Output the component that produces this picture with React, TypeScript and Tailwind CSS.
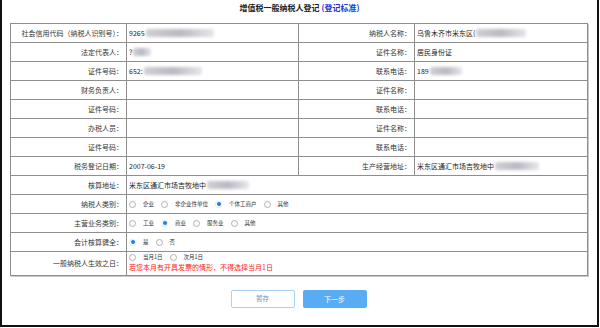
import React from 'react';

// 增值税一般纳税人登记 form

const font = { fontFamily: '"Noto Sans CJK SC", "Liberation Sans", sans-serif' };

const Blur: React.FC<{ w: number }> = ({ w }) => (
  <span
    className="inline-block h-[8px] ml-[1px] rounded-[2px] bg-gradient-to-r from-[#cfcfd4] via-[#b9bac2] to-[#e6e6ea] blur-[1.5px] align-middle"
    style={{ width: w }}
  />
);

const Radio: React.FC<{ checked?: boolean }> = ({ checked }) => (
  <span
    className={
      'inline-flex w-[7px] h-[7px] rounded-full border items-center justify-center shrink-0 ' +
      (checked ? 'border-[#d6e6f7]' : 'border-[#b0b0b0]')
    }
  >
    {checked && <span className="w-[4px] h-[4px] rounded-full bg-[#1b7fe3]" />}
  </span>
);

const Options: React.FC<{ items: string[]; checked: number }> = ({ items, checked }) => (
  <div className="flex items-center gap-[7px]">
    {items.map((it, i) => (
      <React.Fragment key={it}>
        <Radio checked={i === checked} />
        <span className="text-[5.5px] leading-[7px] text-[#333]">{it}</span>
      </React.Fragment>
    ))}
  </div>
);

const Label: React.FC<{ children: React.ReactNode; tall?: boolean }> = ({ children, tall }) => (
  <div
    className={
      'flex items-center justify-end pr-[3px] border-r border-b border-[#8e8e8e] text-[7px] text-[#333] whitespace-nowrap ' +
      (tall ? 'h-[24px]' : 'h-[19px]')
    }
  >
    {children}
  </div>
);

const Value: React.FC<{ children?: React.ReactNode; wide?: boolean }> = ({ children, wide }) => (
  <div
    className={
      'flex items-center pl-[2px] h-[19px] border-r border-b border-[#8e8e8e] text-[7px] text-[#222] whitespace-nowrap ' +
      (wide ? 'col-span-3' : '')
    }
  >
    {children}
  </div>
);

export default function App() {
  return (
    <div className="w-[600px] h-[328px] bg-white" style={font}>
      <div className="w-[599px] h-[327px] border-l-2 border-r-2 border-b-2 border-[#111] flex flex-col">
        <div className="h-[23px] flex justify-center pt-[2px]">
          <span className="text-[8px] leading-[12px] font-bold text-[#222]">
            增值税一般纳税人登记 <span className="text-[#2233cc]">(登记标准)</span>
          </span>
        </div>

        <div className="ml-[8px] w-[578px] grid grid-cols-[116px_172px_116px_173px] border-l border-t border-[#8e8e8e] shadow-[1px_1px_0_#c8c8c8]">
          <Label>社会信用代码（纳税人识别号）：</Label>
          <Value>9265<Blur w={68} /></Value>
          <Label>纳税人名称：</Label>
          <Value>乌鲁木齐市米东区(<Blur w={50} /></Value>

          <Label>法定代表人：</Label>
          <Value>?<Blur w={18} /></Value>
          <Label>证件名称：</Label>
          <Value>居民身份证</Value>

          <Label>证件号码：</Label>
          <Value>652:<Blur w={58} /></Value>
          <Label>联系电话：</Label>
          <Value>189<Blur w={32} /></Value>

          <Label>财务负责人：</Label>
          <Value />
          <Label>证件名称：</Label>
          <Value />

          <Label>证件号码：</Label>
          <Value />
          <Label>联系电话：</Label>
          <Value />

          <Label>办税人员：</Label>
          <Value />
          <Label>证件名称：</Label>
          <Value />

          <Label>证件号码：</Label>
          <Value />
          <Label>联系电话：</Label>
          <Value />

          <Label>税务登记日期：</Label>
          <Value>2007-06-19</Value>
          <Label>生产经营地址：</Label>
          <Value>米东区通汇市场吉牧地中<Blur w={44} /></Value>

          <Label>核算地址：</Label>
          <Value wide>米东区通汇市场吉牧地中<Blur w={42} /></Value>

          <Label>纳税人类别：</Label>
          <Value wide>
            <Options items={['企业', '非企业性单位', '个体工商户', '其他']} checked={2} />
          </Value>

          <Label>主营业务类别：</Label>
          <Value wide>
            <Options items={['工业', '商业', '服务业', '其他']} checked={1} />
          </Value>

          <Label>会计核算健全：</Label>
          <Value wide>
            <Options items={['是', '否']} checked={0} />
          </Value>

          <Label tall>一般纳税人生效之日：</Label>
          <div className="col-span-3 h-[24px] pl-[2px] pt-[2px] border-r border-b border-[#8e8e8e] flex flex-col gap-[2px]">
            <Options items={['当月1日', '次月1日']} checked={-1} />
            <span className="text-[7px] leading-[9px] text-[#f22]">若您本月有开具发票的情形，不得选择当月1日</span>
          </div>
        </div>

        <div className="flex justify-center gap-[8px] mt-[14px] ml-[-2px]">
          <button className="w-[64px] h-[18px] rounded-[2px] border border-[#a8d3f7] bg-white text-[6.5px] text-[#6f8fb0]">
            暂存
          </button>
          <button className="w-[64px] h-[18px] rounded-[2px] bg-[#58acf4] text-[7px] text-white">
            下一步
          </button>
        </div>
      </div>
    </div>
  );
}
